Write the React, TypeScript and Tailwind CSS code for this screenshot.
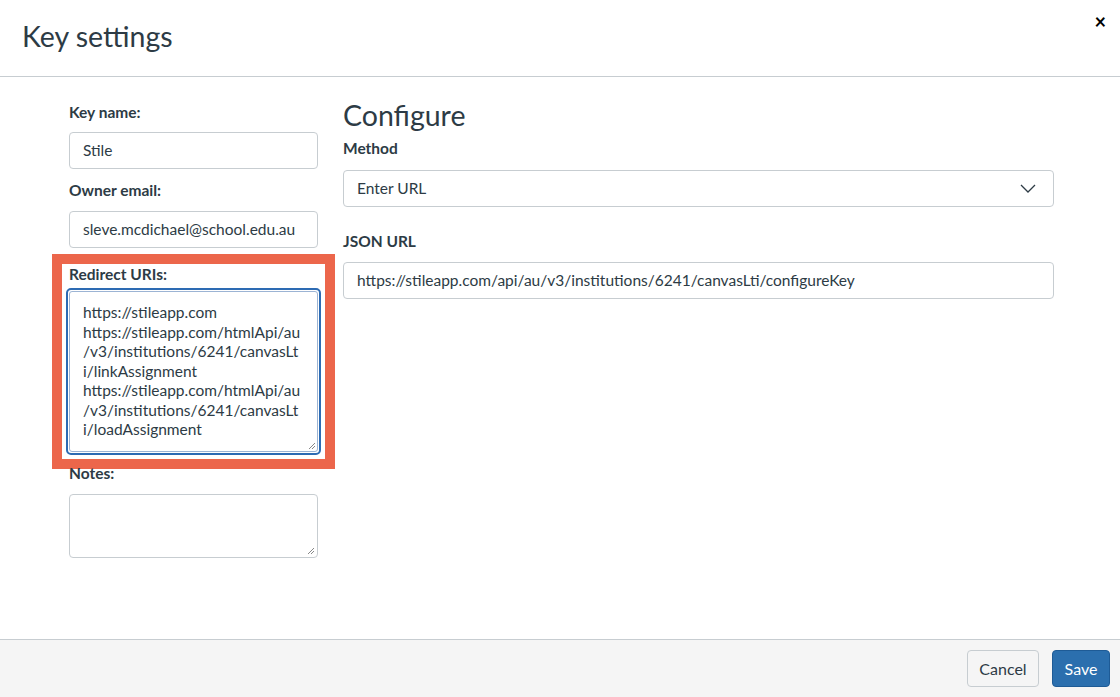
import React from "react";

const F = { fontFamily: "Lato, 'Open Sans', sans-serif" };

export default function App() {
  const input = "h-[37px] w-full rounded-[4px] border border-[#c7cdd1] bg-white px-[13px] text-[15.5px] text-[#2d3b45] flex items-center";
  return (
    <div style={F} className="w-[1120px] h-[697px] bg-white flex flex-col text-[#2d3b45] overflow-hidden">
      <div className="h-[77px] border-b border-[#c7cdd1] relative flex items-center px-[22px]">
        <h1 className="text-[28.5px] font-normal text-[#2d3b45] leading-none -mt-[4px]">Key settings</h1>
        <span className="absolute right-[14px] top-[6px] text-[20px] font-bold text-black">×</span>
      </div>
      <div className="flex-1 flex pt-[25px]">
        <div className="ml-[69px] w-[249px] flex flex-col">
          <div className="text-[15.5px] font-bold leading-[20px]">Key name:</div>
          <div className={input + " mt-[10px]"}>Stile</div>
          <div className="text-[15.5px] font-bold leading-[20px] mt-[11px]">Owner email:</div>
          <div className={input + " mt-[11px]"}>sleve.mcdichael@school.edu.au</div>
          <div className="-mx-[17px] mt-[6px] border-[10px] border-[#ec664b] px-[4px] pt-[0px] pb-[4px]">
            <div className="text-[15.5px] font-bold leading-[20px] pl-[3px]">Redirect URIs:</div>
            <div className="relative mt-[4px] h-[167px] rounded-[5px] border-2 border-[#2d6bb3] p-[1px]">
              <div className="h-full rounded-[3px] border border-[#9cb4d4] pl-[13px] pt-[11px] text-[15.5px] leading-[19.5px]">
                https://stileapp.com<br />
                https://stileapp.com/htmlApi/au<br />
                /v3/institutions/6241/canvasLt<br />
                i/linkAssignment<br />
                https://stileapp.com/htmlApi/au<br />
                /v3/institutions/6241/canvasLt<br />
                i/loadAssignment
              </div>
              <svg className="absolute right-[3px] bottom-[3px]" width="8" height="8" viewBox="0 0 8 8"><path d="M7 1L1 7M7 4L4 7" stroke="#888" strokeWidth="1" /></svg>
            </div>
          </div>
          <div className="text-[15.5px] font-bold leading-[20px] mt-[-6px]">Notes:</div>
          <div className="relative mt-[11px] h-[64px] rounded-[4px] border border-[#c7cdd1]">
            <svg className="absolute right-[2px] bottom-[2px]" width="8" height="8" viewBox="0 0 8 8"><path d="M7 1L1 7M7 4L4 7" stroke="#888" strokeWidth="1" /></svg>
          </div>
        </div>
        <div className="ml-[25px] w-[711px] flex flex-col">
          <div className="text-[28.5px] font-normal leading-[30px] -mt-[2px]">Configure</div>
          <div className="text-[15.5px] font-bold leading-[20px] mt-[8px]">Method</div>
          <div className={input + " mt-[12px] justify-between"}>
            <span>Enter URL</span>
            <svg width="16" height="10" viewBox="0 0 16 10" className="mr-[4px]"><path d="M1 1l7 7 7-7" fill="none" stroke="#2d3b45" strokeWidth="1.3" /></svg>
          </div>
          <div className="text-[15.5px] font-bold leading-[20px] mt-[24px]">JSON URL</div>
          <div className={input + " mt-[11px]"}>https://stileapp.com/api/au/v3/institutions/6241/canvasLti/configureKey</div>
        </div>
      </div>
      <div className="h-[58px] border-t border-[#c7cdd1] bg-[#f5f5f5] flex items-center justify-end gap-[13px] pr-[10px]">
        <div className="h-[37px] w-[72px] rounded-[4px] border border-[#c7cdd1] bg-[#f5f5f5] flex items-center justify-center text-[16px]">Cancel</div>
        <div className="h-[37px] w-[58px] rounded-[4px] border border-[#1e5b96] bg-[#2b6fae] flex items-center justify-center text-[16px] text-white">Save</div>
      </div>
    </div>
  );
}
